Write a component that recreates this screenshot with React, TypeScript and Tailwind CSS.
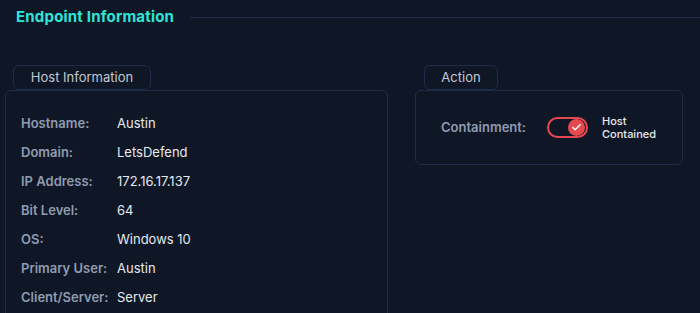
import { Check } from "lucide-react";

const host = [
  ["Hostname:", "Austin"],
  ["Domain:", "LetsDefend"],
  ["IP Address:", "172.16.17.137"],
  ["Bit Level:", "64"],
  ["OS:", "Windows 10"],
  ["Primary User:", "Austin"],
  ["Client/Server:", "Server"],
];

export default function App() {
  return (
    <div
      className="w-[700px] h-[313px] overflow-hidden bg-[#0f1727]"
      style={{ fontFamily: "Inter, 'Noto Sans', sans-serif" }}
    >
      {/* Header */}
      <div className="flex items-center h-[35px] pl-4">
        <h1 className="text-[15px] font-bold text-[#2ee5d8] tracking-[0.2px]">
          Endpoint Information
        </h1>
        <div className="flex-1 h-px bg-[#1f2c47] ml-4" />
      </div>

      <div className="flex gap-[27px] pl-[5px] mt-[30px]">
        {/* Host info */}
        <div className="w-[383px] flex flex-col">
          <div className="ml-2 w-[138px] h-[25px] rounded-md border border-[#1f2c47] flex items-center justify-center text-[13px] text-[#c3c7cf]">
            Host Information
          </div>
          <div className="border border-[#1f2c47] rounded-md h-[240px] pt-[18px] pl-[15px]">
            {host.map(([k, v]) => (
              <div key={k} className="flex items-center h-[29px] text-[13px]">
                <span className="w-[96px] font-semibold text-[#8f9bb0]">{k}</span>
                <span className="text-[#e6e9ee]">{v}</span>
              </div>
            ))}
          </div>
        </div>

        {/* Action */}
        <div className="w-[268px] flex flex-col">
          <div className="ml-[9px] w-[74px] h-[25px] rounded-md border border-[#1f2c47] flex items-center justify-center text-[13px] text-[#c3c7cf]">
            Action
          </div>
          <div className="border border-[#1f2c47] rounded-md h-[75px] flex items-center pl-[25px]">
            <span className="w-[106px] text-[13px] font-semibold text-[#8f9bb0]">
              Containment:
            </span>
            <div className="w-[41px] h-[21px] rounded-full border-2 border-[#e5484f] flex items-center justify-end pr-px">
              <div className="w-[17px] h-[17px] rounded-full bg-[#e5484f] flex items-center justify-center">
                <Check size={11} strokeWidth={3} className="text-white" />
              </div>
            </div>
            <div className="ml-[14px] text-[11px] leading-[13px] text-[#e6e9ee] font-medium">
              <div>Host</div>
              <div>Contained</div>
            </div>
          </div>
        </div>
      </div>
    </div>
  );
}
